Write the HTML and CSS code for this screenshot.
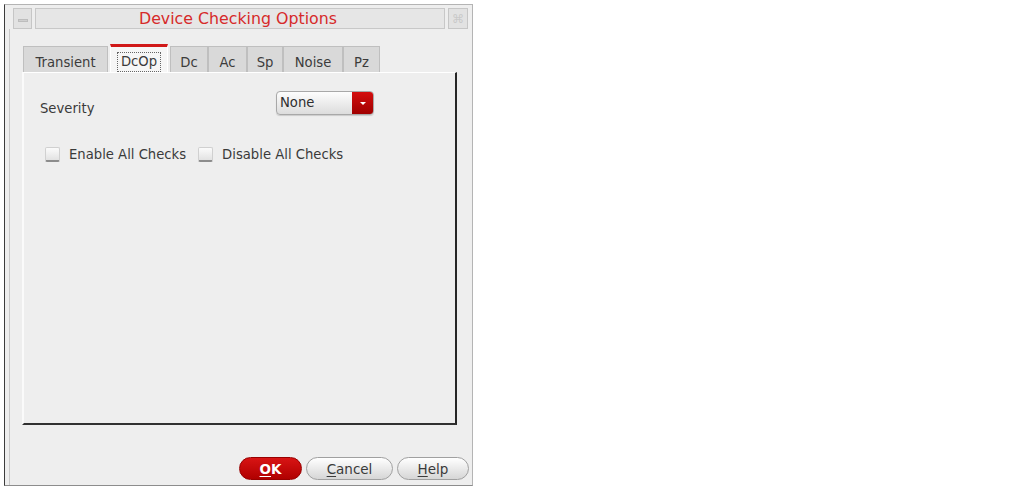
FILE: index.html
```html
<!DOCTYPE html>
<html>
<head>
<meta charset="utf-8">
<link rel="stylesheet" href="styles.css">
</head>
<body>
<div class="window">
  <div class="titlebar">
    <div class="tbtn min"><span class="dash"></span></div>
    <div class="title">Device Checking Options</div>
    <div class="tbtn close"><span class="x">⌘</span></div>
  </div>
  <div class="body">
    <div class="tabs">
      <div class="tab t-transient">Transient</div>
      <div class="tab sel t-dcop"><span class="focus">DcOp</span></div>
      <div class="tab t-dc">Dc</div>
      <div class="tab t-ac">Ac</div>
      <div class="tab t-sp">Sp</div>
      <div class="tab t-noise">Noise</div>
      <div class="tab t-pz">Pz</div>
    </div>
    <div class="panel">
      <div class="row sev">
        <div class="label">Severity</div>
        <div class="combo">
          <span class="cval">None</span>
          <span class="carrow"><svg width="8" height="5" viewBox="0 0 8 5"><path d="M1 1h6L4 4z" fill="#fff"/></svg></span>
        </div>
      </div>
      <div class="row checks">
        <span class="cb"></span><span class="cbl">Enable All Checks</span>
        <span class="cb cb2"></span><span class="cbl">Disable All Checks</span>
      </div>
    </div>
    <div class="buttons">
      <div class="btn ok"><u>O</u>K</div>
      <div class="btn cancel"><u>C</u>ancel</div>
      <div class="btn help"><u>H</u>elp</div>
    </div>
  </div>
</div>
</body>
</html>
```
FILE: styles.css
```css
* { box-sizing: border-box; }
html, body { margin: 0; padding: 0; background: #ffffff; }
body { font-family: "DejaVu Sans", "Liberation Sans", sans-serif; font-size: 13.2px; color: #3a3a3a; }

.window {
  margin: 4px 0 0 4px;
  width: 469px;
  height: 482px;
  background: #eeeeee;
  border-left: 1px solid #3c3c3c;
  border-top: 1px solid #b4b4b4;
  border-right: 1px solid #b4b4b4;
  border-bottom: 1px solid #8c8c8c;
  padding: 3px 1px 0 4px;
  display: flex;
  flex-direction: column;
}

.titlebar {
  height: 21px;
  display: flex;
  gap: 3px;
  flex: none;
  margin-left: 4px;
}
.tbtn {
  width: 19px;
  height: 21px;
  border: 1px solid #c6c6c6;
  background: #e2e2e2;
  display: flex;
  align-items: center;
  justify-content: center;
}
.tbtn.close { width: 20px; margin-right: 3px; }
.dash { width: 10px; height: 3px; background: #cfcfcf; border: 1px solid #bdbdbd; margin-top: 3px; }
.x { color: #c9c9c9; font-size: 12px; }
.title {
  flex: 1;
  height: 21px;
  border: 1px solid #c8c8c8;
  background: #e6e6e6;
  color: #d62a2a;
  font-size: 15.8px;
  line-height: 19px;
  text-align: center;
  padding-right: 4px;
}

.body {
  flex: 1;
  border-left: 1px solid #c8c8c8;
  display: flex;
  flex-direction: column;
  padding-left: 13px;
}

.tabs {
  display: flex;
  margin-top: 15px;
  height: 28px;
  align-items: flex-end;
}
.tab {
  height: 26px;
  border: 1px solid #bfbfbf;
  border-bottom: none;
  background: #d9d9d9;
  display: flex;
  align-items: center;
  justify-content: center;
  color: #3c3c3c;
  padding-top: 5px;
}
.t-transient { width: 85px; margin-right: 2px; }
.t-dcop { width: 58px; margin-right: 2px; }
.t-dc { width: 38px; }
.t-ac { width: 39px; }
.t-sp { width: 36px; }
.t-noise { width: 60px; }
.t-pz { width: 37px; }
.tab.sel {
  height: 28px;
  background: #f6f6f6;
  border: none;
  border-top: 3px solid #d01818;
  border-left: 1px solid #ffffff;
  border-right: 1px solid #ffffff;
  padding-top: 4px;
}
.focus {
  border: 1px dotted #666;
  padding: 1px 3px 1px;
  line-height: 16px;
}

.panel {
  margin-left: -1px;
  width: 435px;
  height: 353px;
  border-top: 1px solid #ffffff;
  border-left: 2px solid #fafafa;
  border-right: 2px solid #262626;
  border-bottom: 2px solid #303030;
  padding: 18px 0 0 16px;
  flex: none;
}
.row { display: flex; }
.sev { align-items: flex-start; height: 24px; }
.label { width: 236px; margin-top: 10px; line-height: 16px; }
.combo {
  width: 98px;
  height: 24px;
  border: 1px solid #a8a8a8;
  border-radius: 4px;
  background: linear-gradient(#fdfdfd, #dcdcdc);
  display: flex;
  overflow: hidden;
  box-shadow: 0 1px 1px rgba(0,0,0,0.15);
}
.cval { flex: 1; padding-left: 3px; line-height: 22px; color: #2e2e2e; }
.carrow {
  width: 21px;
  background: linear-gradient(#d40e0e, #a00000);
  display: flex;
  align-items: center;
  justify-content: center;
}

.checks { margin-top: 30px; align-items: center; height: 18px; }
.cb {
  width: 15px;
  height: 15px;
  margin-left: 5px;
  border: 1px solid #d0d0d0;
  border-bottom: 2px solid #8c8c8c;
  border-radius: 2px;
  background: linear-gradient(#fbfbfb, #e2e2e2);
}
.cb2 { margin-left: 12px; }
.cbl { margin-left: 9px; color: #3a3a3a; }

.buttons {
  margin-top: auto;
  margin-bottom: 5px;
  display: flex;
  justify-content: flex-end;
  gap: 4px;
  padding-right: 2px;
}
.btn {
  height: 23px;
  border-radius: 12px;
  display: flex;
  align-items: center;
  justify-content: center;
  font-size: 13.5px;
  border: 1px solid #a0a0a0;
  background: linear-gradient(#ffffff, #e6e6e6 60%, #d6d6d6);
  color: #3a3a3a;
}
.btn u { text-decoration-thickness: 1px; text-underline-offset: 2px; }
.ok {
  width: 63px;
  background: linear-gradient(#d81414, #b00000);
  border-color: #980000;
  color: #ffffff;
  font-weight: bold;
}
.cancel { width: 87px; }
.help { width: 72px; }
```
